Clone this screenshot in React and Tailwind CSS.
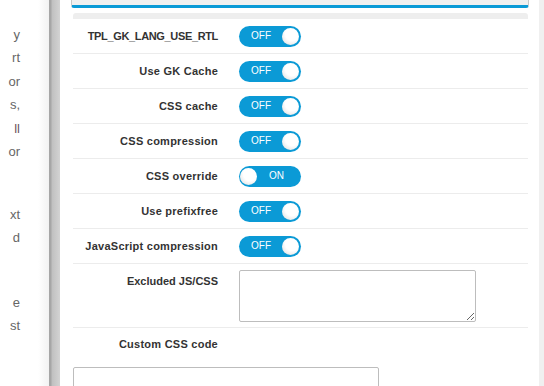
import React from 'react'

const BLUE = 'bg-[#0b9ad6]'

function Toggle({ on }) {
  if (on) {
    return (
      <div className={`flex h-[21px] w-[62px] items-center rounded-full ${BLUE} pl-[1px]`}>
        <span className="h-[17px] w-[17px] rounded-full bg-[radial-gradient(circle_at_60%_35%,#ffffff_45%,#d9d9d9_100%)]" />
        <span className="ml-[12px] text-[10px] leading-none text-white">ON</span>
      </div>
    )
  }
  return (
    <div className={`flex h-[21px] w-[62px] items-center justify-between rounded-full ${BLUE} pl-[12px] pr-[2px]`}>
      <span className="text-[10px] leading-none text-white">OFF</span>
      <span className="h-[17px] w-[17px] rounded-full bg-[radial-gradient(circle_at_60%_35%,#ffffff_45%,#d9d9d9_100%)]" />
    </div>
  )
}

const ROWS = [
  { label: 'TPL_GK_LANG_USE_RTL', on: false, tight: true },
  { label: 'Use GK Cache', on: false },
  { label: 'CSS cache', on: false },
  { label: 'CSS compression', on: false },
  { label: 'CSS override', on: true },
  { label: 'Use prefixfree', on: false },
  { label: 'JavaScript compression', on: false },
]

const labelCls = 'w-[145px] shrink-0 text-right text-[11px] font-bold leading-[13px] text-[#333]'

// only the tail ends of the article lines show beside the panel
function SideLine({ text, className = '' }) {
  return <div className={`w-[20px] text-right ${className}`}>{text}</div>
}

export default function App() {
  return (
    <div
      className="flex h-[386px] w-[544px] overflow-hidden bg-white"
      style={{ fontFamily: '"Liberation Sans", Arial, sans-serif' }}
    >
      {/* clipped article text on the left */}
      <div className="w-[49px] shrink-0 bg-[linear-gradient(to_right,#ffffff_38px,#f2f2f2_49px)] pt-[23px] text-[13px] leading-[23.4px] text-[#666]">
        <SideLine text="y" />
        <SideLine text="rt" />
        <SideLine text="or" />
        <SideLine text="s," />
        <SideLine text={<span className="text-[#6e5561]">ll</span>} />
        <SideLine text="or" />
        <SideLine text="" className="h-[23.4px]" />
        <SideLine text="xt" className="mt-[16px]" />
        <SideLine text="d" />
        <SideLine text="" className="h-[23.4px]" />
        <SideLine text="e" className="mt-[18px]" />
        <SideLine text="st" />
      </div>

      {/* divider */}
      <div className="w-[11px] shrink-0 bg-[linear-gradient(to_right,#a6a6a6_0px,#a6a6a6_2px,#c0c0c0_3px,#d3d3d3_11px)]" />

      {/* main panel */}
      <div className="w-[479px] shrink-0 overflow-hidden bg-white">
        <div className="ml-[11px] mr-[10px] h-[8px] rounded-b-[3px] border-x border-b-[3px] border-x-[#c8c8c8] border-b-[#0b9ad6] bg-[#f0f0f0]" />
        <div className="ml-[13px] mr-[11px] mt-[5px] h-[6px] rounded-t-[3px] bg-[#eeeeee]" />

        <div className="ml-[13px] mr-[11px]">
          {ROWS.map((r) => (
            <div key={r.label} className="flex h-[35px] items-center border-b border-[#ececec]">
              <div className={`${labelCls} ${r.tight ? 'tracking-[-0.35px]' : 'tracking-[0.25px]'}`}>{r.label}</div>
              <div className="ml-[21px]">
                <Toggle on={r.on} />
              </div>
            </div>
          ))}

          <div className="flex items-start border-b border-[#ececec] pb-[5px] pt-[6px]">
            <div className={`${labelCls} mt-[5px]`}>Excluded JS/CSS</div>
            <textarea className="ml-[21px] h-[52px] w-[237px] rounded-[2px] border border-[#bdbdbd] bg-white" />
          </div>

          <div className="pt-[10px]">
            <div className={`${labelCls} tracking-[0.25px]`}>Custom CSS code</div>
            <textarea className="mt-[16px] block h-[60px] w-[306px] rounded-[2px] border border-[#bdbdbd] bg-white" />
          </div>
        </div>
      </div>

      {/* scrollbar strip */}
      <div className="w-[5px] shrink-0 bg-[#f0f0f0]" />
    </div>
  )
}
